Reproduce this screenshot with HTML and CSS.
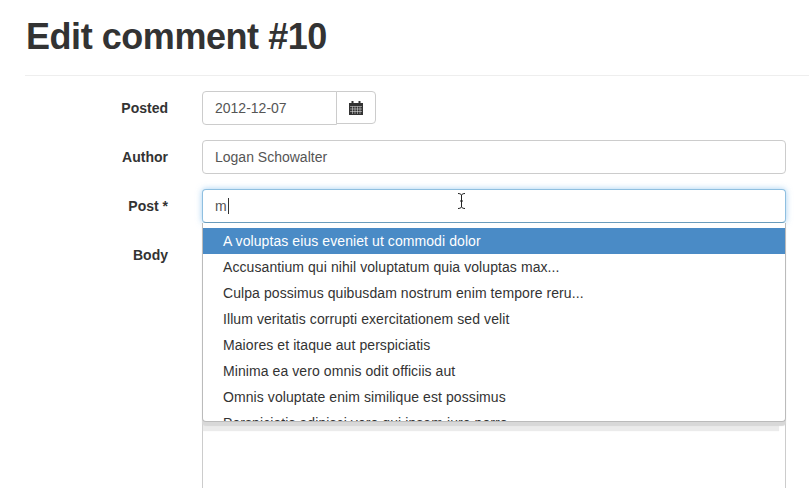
FILE: index.html
```html
<!DOCTYPE html>
<html lang="en">
<head>
  <meta charset="UTF-8">
  <meta name="viewport" content="width=device-width, initial-scale=1.0">
  <link rel="stylesheet" href="styles.css">
  <title>Edit comment #10</title>
</head>
<body>

<div class="page-header">
  <h1>Edit comment #10</h1>
</div>

<form class="edit-form">
  <div class="form-row">
    <label>Posted</label>
    <div class="input-group">
      <input type="text" class="form-control date-input" value="2012-12-07">
      <button type="button" class="calendar-btn" aria-label="Pick a date">
        <svg width="14" height="14" viewBox="0 0 14 14">
          <path fill="#333" d="M2.500 0h2v2h5V0h2v2H14v12H0V2h2.500z"/>
          <path fill="none" stroke="#fff" stroke-width=".6" opacity=".75" d="M1 5.500h12M1 8h12M1 10.500h12M3.500 5.500V13M6 5.500V13M8.500 5.500V13M11 5.500V13"/>
        </svg>
      </button>
    </div>
  </div>

  <div class="form-row">
    <label>Author</label>
    <input type="text" class="form-control" value="Logan Schowalter">
  </div>

  <div class="form-row">
    <label>Post *</label>
    <div class="autocomplete">
      <div class="form-control focused">m<span class="caret"></span></div>
      <svg class="ibeam" width="9" height="16" viewBox="0 0 9 16">
        <path fill="none" stroke="#222" stroke-width="1" d="M1 .5c1.500 0 3 .5 3.500 1.500C5 1 6.500.5 8 .5M4.500 2v12M1 15.500c1.500 0 3-.5 3.500-1.500.5 1 2 1.500 3.500 1.500M3 8h3"/>
      </svg>
      <ul class="suggestions">
        <li class="active">A voluptas eius eveniet ut commodi dolor</li>
        <li>Accusantium qui nihil voluptatum quia voluptas max...</li>
        <li>Culpa possimus quibusdam nostrum enim tempore reru...</li>
        <li>Illum veritatis corrupti exercitationem sed velit</li>
        <li>Maiores et itaque aut perspiciatis</li>
        <li>Minima ea vero omnis odit officiis aut</li>
        <li>Omnis voluptate enim similique est possimus</li>
        <li>Perspiciatis adipisci vero qui ipsam iure porro</li>
      </ul>
    </div>
  </div>

  <div class="form-row">
    <label>Body</label>
    <textarea class="form-control body-input"></textarea>
  </div>
</form>

</body>
</html>
```

FILE: styles.css
```css
html, body {
  height: 488px;
  overflow: hidden;
}

body {
  font-family: "Liberation Sans", Arial, sans-serif;
  font-size: 14px;
  color: #333;
  background-color: #fff;
  margin: 0;
  padding-left: 25px;
}

h1 {
  font-size: 36px;
  font-weight: 700;
  line-height: 40px;
  letter-spacing: -0.45px;
  margin: 0;
  padding: 17px 0 0 1px;
}

.page-header {
  height: 75px;
  border-bottom: 1px solid #eee;
  margin-bottom: 15px;
}

.edit-form {
  display: flex;
  flex-direction: column;
  gap: 15px;
  padding-right: 23px;
}

.form-row {
  display: grid;
  grid-template-columns: 143px 1fr;
  column-gap: 34px;
}

label {
  font-weight: 700;
  text-align: right;
  line-height: 34px;
}

.form-control {
  display: block;
  box-sizing: border-box;
  width: 100%;
  height: 34px;
  padding: 6px 12px;
  font-family: inherit;
  font-size: 14px;
  line-height: 20px;
  color: #555;
  background-color: #fff;
  border: 1px solid #ccc;
  border-radius: 4px;
  outline: none;
}

.focused {
  border-color: #8fbfe0 #8fbfe0 #6a9cbc;
  box-shadow: 0 0 6px rgba(102, 175, 233, 0.6);
}

.caret {
  display: inline-block;
  width: 1px;
  height: 16px;
  margin-left: 1px;
  vertical-align: -3px;
  background-color: #333;
}

.input-group {
  display: flex;
  align-items: flex-start;
}

.date-input {
  width: 135px;
  border-radius: 4px 0 0 4px;
}

.calendar-btn {
  display: flex;
  align-items: center;
  justify-content: center;
  width: 40px;
  height: 33px;
  margin-left: -1px;
  padding: 0;
  background-color: #fff;
  border: 1px solid #ccc;
  border-radius: 0 4px 4px 0;
}

.autocomplete {
  position: relative;
}

.ibeam {
  position: absolute;
  left: 255px;
  top: 4px;
}

.suggestions {
  position: absolute;
  top: 34px;
  left: 0;
  right: 0;
  z-index: 10;
  box-sizing: border-box;
  height: 199px;
  margin: 0;
  padding: 5px 0 0;
  overflow: hidden;
  list-style: none;
  background-color: #fff;
  border: 1px solid #bbb;
  border-top: none;
  border-radius: 0 0 4px 4px;
  box-shadow: 0 4px 1px 0 #d8d8d8, -3px 13px 1px -4px #ebebeb;
}

.suggestions li {
  height: 26px;
  padding-left: 20px;
  line-height: 26px;
  letter-spacing: 0.08px;
  white-space: nowrap;
}

.suggestions .active {
  color: #fff;
  background-color: #4a8bc6;
}

.body-input {
  height: 300px;
  resize: none;
}
```
